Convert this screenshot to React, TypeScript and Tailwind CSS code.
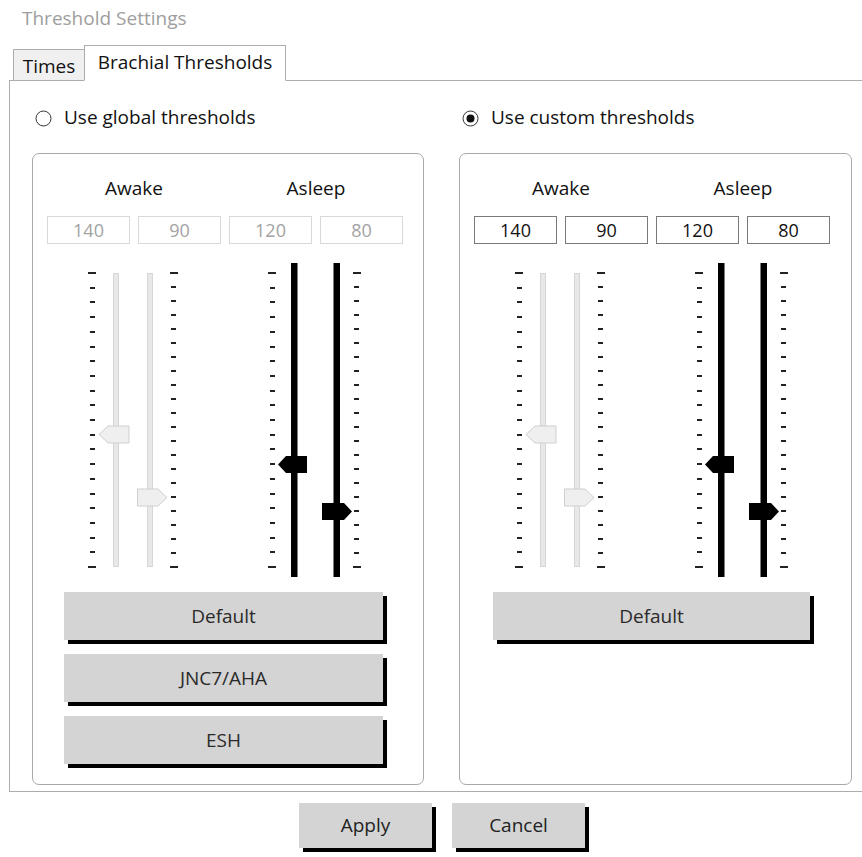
import React from "react";

function Radio({ checked }: { checked: boolean }) {
  return (
    <svg width="17" height="17" viewBox="0 0 17 17" className="shrink-0">
      <circle cx="8.5" cy="8.5" r="7.5" fill="white" stroke="#333" strokeWidth="1" />
      {checked && <circle cx="8.5" cy="8.5" r="4" fill="#111" />}
    </svg>
  );
}

function Sliders({ awakeEnabled }: { awakeEnabled: boolean }) {
  const top = 13;
  const bottom = 307;
  const ticks = (count: number) =>
    Array.from({ length: count + 1 }, (_, i) => top + ((bottom - top) * i) / count);
  const left = ticks(20);
  const right = ticks(21);
  const col = (ys: number[], sx: number, sw: number, lx: number, lw: number, key: string) =>
    ys.map((y, i) => {
      const end = i === 0 || i === ys.length - 1;
      return (
        <rect
          key={key + i}
          x={end ? lx : sx}
          y={Math.round(y) - 1}
          width={end ? lw : sw}
          height={2}
          fill="#222"
        />
      );
    });
  const light = "#efefef";
  const lightStroke = "#cfcfcf";
  return (
    <svg width="392" height="320" viewBox="0 0 392 320" className="block">
      {/* Awake */}
      {col(left, 57, 5, 55, 8, "al")}
      {col(right, 138, 5, 137, 8, "ar")}
      <rect x="80.5" y="13.5" width="5" height="293" fill="#e8e8e8" stroke="#d6d6d6" />
      <rect x="114.5" y="13.5" width="5" height="293" fill="#e8e8e8" stroke="#d6d6d6" />
      <polygon
        points="66,174.5 75,166 96,166 96,183 75,183"
        fill={awakeEnabled ? "#000" : light}
        stroke={awakeEnabled ? "#000" : lightStroke}
      />
      <polygon
        points="104.5,229 125,229 134,237.5 125,246 104.5,246"
        fill={awakeEnabled ? "#000" : light}
        stroke={awakeEnabled ? "#000" : lightStroke}
      />
      {/* Asleep */}
      {col(left, 237, 5, 235, 8, "sl")}
      {col(right, 321, 5, 320, 8, "sr")}
      <rect x="258" y="3" width="6.5" height="314" fill="#000" />
      <rect x="300.5" y="3" width="6.5" height="314" fill="#000" />
      <polygon points="245,204.5 253,196 274,196 274,213 253,213" fill="#000" />
      <polygon points="289,243 311,243 319,251.5 311,260 289,260" fill="#000" />
    </svg>
  );
}

function Btn({ label, className }: { label: string; className: string }) {
  return (
    <div
      className={`h-[48px] bg-[#d4d4d4] shadow-[4px_4px_0_#000] flex items-center justify-center text-[#2a2a2a] text-[19px] ${className}`}
    >
      {label}
    </div>
  );
}

function ValueBox({ v, enabled }: { v: string; enabled: boolean }) {
  return (
    <div
      className={
        enabled
          ? "h-[28px] border border-[#7a7a7a] flex items-center justify-center text-[18px] text-[#111]"
          : "h-[28px] border border-[#d9d9d9] flex items-center justify-center text-[18px] text-[#a3a3a3]"
      }
    >
      {v}
    </div>
  );
}

function Group({ enabled, buttons, btnClass }: { enabled: boolean; buttons: string[]; btnClass: string }) {
  return (
    <div className="h-[632px] border border-[#a9a9a9] rounded-[7px] mt-[25px]">
      <div className="pt-[21px] pl-[14px] grid grid-cols-[83px_83px_83px_83px] gap-x-[8px]">
        <div className="col-span-2 h-[26px] leading-[26px] text-center text-[19px] text-[#111]">Awake</div>
        <div className="col-span-2 h-[26px] leading-[26px] text-center text-[19px] text-[#111]">Asleep</div>
        <div className="col-span-4 h-[15px]" />
        <ValueBox v="140" enabled={enabled} />
        <ValueBox v="90" enabled={enabled} />
        <ValueBox v="120" enabled={enabled} />
        <ValueBox v="80" enabled={enabled} />
      </div>
      <div className="mt-[16px]">
        <Sliders awakeEnabled={false} />
      </div>
      <div className="mt-[12px] flex flex-col gap-[14px]">
        {buttons.map((b) => (
          <Btn key={b} label={b} className={btnClass} />
        ))}
      </div>
    </div>
  );
}

export default function App() {
  return (
    <div className="w-[862px] h-[857px] bg-white overflow-hidden font-['Open_Sans',sans-serif] text-black">
      <div className="pl-[22px] pt-[5px] h-[45px] leading-[26px] text-[19px] text-[#9e9e9e]">Threshold Settings</div>
      <div className="flex items-end h-[36px] pl-[13px] relative z-10">
        <div className="h-[31px] mb-px w-[72px] border border-b-0 border-[#acacac] bg-[#f0f0f0] flex items-center justify-center pt-[2px] text-[19px] text-[#111]">
          Times
        </div>
        <div className="h-[36px] w-[202px] -ml-px border border-[#acacac] border-b-white bg-white flex items-center justify-center pb-[1px] text-[19px] text-[#111]">
          Brachial Thresholds
        </div>
      </div>
      <div className="ml-[9px] -mt-px w-[853px] h-[712px] border-l border-t border-b border-[#acacac] pl-[22px]">
        <div className="grid grid-cols-[392px_393px] gap-x-[35px]">
          <div>
            <div className="mt-[27px] h-[20px] flex items-center pl-[3px] gap-[12px] text-[19px] text-[#111]">
              <Radio checked={false} />
              <span className="-mt-[2px]">Use global thresholds</span>
            </div>
            <Group enabled={false} buttons={["Default", "JNC7/AHA", "ESH"]} btnClass="ml-[31px] w-[319px]" />
          </div>
          <div>
            <div className="mt-[27px] h-[20px] flex items-center pl-[3px] gap-[12px] text-[19px] text-[#111]">
              <Radio checked={true} />
              <span className="-mt-[2px]">Use custom thresholds</span>
            </div>
            <Group enabled={true} buttons={["Default"]} btnClass="ml-[33px] w-[317px]" />
          </div>
        </div>
      </div>
      <div className="flex pl-[299px] gap-[20px] mt-[11px]">
        <div className="w-[133px] h-[45px] bg-[#d4d4d4] shadow-[4px_4px_0_#000] flex items-center justify-center text-[19px] text-[#222]">
          Apply
        </div>
        <div className="w-[133px] h-[45px] bg-[#d4d4d4] shadow-[4px_4px_0_#000] flex items-center justify-center text-[19px] text-[#222]">
          Cancel
        </div>
      </div>
    </div>
  );
}
